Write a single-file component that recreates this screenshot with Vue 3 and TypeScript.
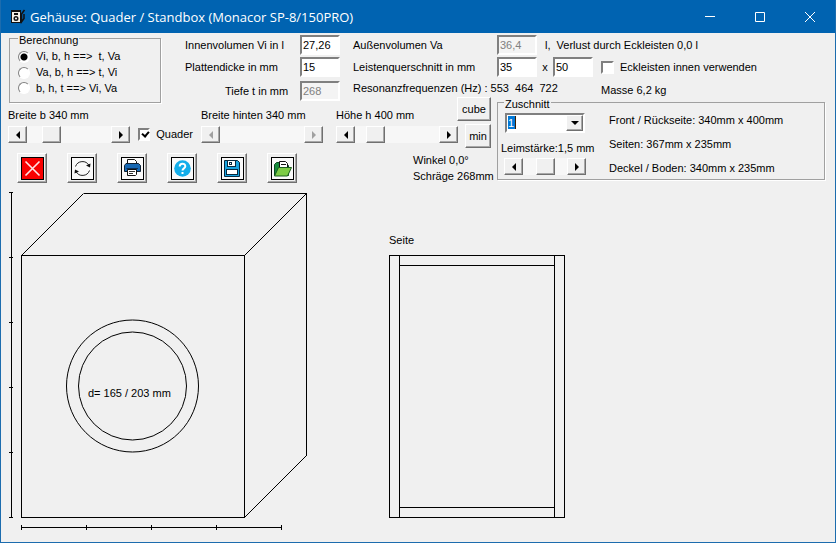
<script setup lang="ts">
import { ref } from 'vue'

const modes = ['Vi, b, h ==>  t, Va', 'Va, b, h ==> t, Vi', 'b, h, t ==> Vi, Va']
const mode = ref(0)
const innerVolume = ref('27,26')
const thickness = ref('15')
const depth = ref('268')
const outerVolume = ref('36,4')
const stripA = ref('35')
const stripB = ref('50')
const useStrips = ref(false)
const isBox = ref(true)
const width = ref(340)
const rearWidth = ref(340)
const height = ref(400)
const glue = ref(15)
const cut = ref('1')

const formatTenths = (n: number): string => (n / 10).toFixed(1).replace('.', ',')
</script>

<template>
  <div class="window">
    <header class="titlebar">
      <svg class="app-icon" width="16" height="16" viewBox="0 0 16 16" aria-hidden="true">
        <rect x="1" y="1" width="10" height="13" fill="#111" />
        <rect x="2" y="3" width="8" height="10" fill="#f3efe6" />
        <rect x="4" y="4" width="4" height="2" fill="#111" />
        <circle cx="6" cy="9.500" r="2.500" fill="#111" />
        <circle cx="6" cy="9.500" r="1" fill="#fff" />
        <path d="M14.500 1L11.500 5V13L14 9.500V5" fill="none" stroke="#111" stroke-width="1.500" />
      </svg>
      <h1>Gehäuse: Quader / Standbox (Monacor SP-8/150PRO)</h1>
      <button class="caption" type="button" aria-label="Minimieren">
        <svg width="10" height="10" viewBox="0 0 10 10"><path d="M0 4.500H10" /></svg>
      </button>
      <button class="caption" type="button" aria-label="Maximieren">
        <svg width="10" height="10" viewBox="0 0 10 10"><path d="M.5 .5H9.500V9.500H.5Z" /></svg>
      </button>
      <button class="caption" type="button" aria-label="Schließen">
        <svg width="10" height="10" viewBox="0 0 10 10"><path d="M0 0L10 10M10 0L0 10" /></svg>
      </button>
    </header>

    <main>
      <div class="panel">
        <section class="inner">
          <fieldset class="group calc">
            <legend>Berechnung</legend>
            <label v-for="(m, i) in modes" :key="i" class="option">
              <input v-model="mode" type="radio" name="mode" :value="i" />
              <span>{{ m }}</span>
            </label>
          </fieldset>
          <div class="fields">
            <div class="field">
              <label for="vi">Innenvolumen Vi in l</label>
              <input id="vi" v-model="innerVolume" class="box" type="text" />
            </div>
            <div class="field">
              <label for="pd">Plattendicke in mm</label>
              <input id="pd" v-model="thickness" class="box" type="text" />
            </div>
            <div class="field depth">
              <label for="td">Tiefe t in mm</label>
              <input id="td" v-model="depth" class="box" type="text" disabled />
            </div>
          </div>
        </section>

        <section class="outer">
          <label for="va">Außenvolumen Va</label>
          <div class="line">
            <input id="va" v-model="outerVolume" class="box" type="text" disabled />
            <span class="loss">l,&nbsp; Verlust durch Eckleisten 0,0 l</span>
          </div>
          <label for="la">Leistenquerschnitt in mm</label>
          <div class="line">
            <input id="la" v-model="stripA" class="box" type="text" />
            <span class="times">x</span>
            <input v-model="stripB" class="box" type="text" aria-label="Leistenquerschnitt, zweites Maß" />
            <label class="tick strips">
              <input v-model="useStrips" type="checkbox" />
              <span>Eckleisten innen verwenden</span>
            </label>
          </div>
          <div class="results">
            <span>Resonanzfrequenzen (Hz) : 553&nbsp; 464&nbsp; 722</span>
            <span class="mass">Masse 6,2 kg</span>
          </div>
        </section>

        <section class="widths">
          <div class="sliders">
            <div class="slider">
              <label for="b">Breite b {{ width }} mm</label>
              <div class="scroll">
                <button type="button" aria-label="Breite verringern" @click="width--"><i class="tri left"></i></button>
                <input id="b" v-model.number="width" type="range" min="100" max="1140" />
                <button type="button" aria-label="Breite erhöhen" @click="width++"><i class="tri right"></i></button>
              </div>
            </div>
            <label class="tick">
              <input v-model="isBox" type="checkbox" />
              <span>Quader</span>
            </label>
            <div class="slider">
              <label for="bh">Breite hinten {{ rearWidth }} mm</label>
              <div class="scroll off">
                <button type="button" disabled aria-label="Breite hinten verringern"><i class="tri left"></i></button>
                <input id="bh" v-model.number="rearWidth" type="range" min="100" max="1140" disabled />
                <button type="button" disabled aria-label="Breite hinten erhöhen"><i class="tri right"></i></button>
              </div>
            </div>
          </div>
          <nav class="toolbar">
            <button type="button" class="raised" aria-label="Schließen">
              <svg viewBox="0 0 23 23">
                <rect x=".5" y=".5" width="22" height="22" fill="#f80000" stroke="#000" />
                <path d="M4.500 4.500L18.500 18.500M18.500 4.500L4.500 18.500" stroke="#ffe4e4" stroke-width="1.600" />
              </svg>
            </button>
            <button type="button" class="raised" aria-label="Neu berechnen">
              <svg viewBox="0 0 23 23">
                <rect x=".5" y=".5" width="22" height="22" fill="#fafafa" stroke="#000" />
                <path d="M4.500 9.500A7.400 7.400 0 0 1 18 8.500M18.500 13.500A7.400 7.400 0 0 1 5 14.500" fill="none" stroke="#222" />
                <path d="M15 8.500L19.500 6.500L19 10.500ZM8 14.500L3.500 16.500L4 12.500Z" fill="#111" />
              </svg>
            </button>
            <button type="button" class="raised" aria-label="Drucken">
              <svg viewBox="0 0 23 23">
                <rect x=".5" y=".5" width="22" height="22" fill="#fafafa" stroke="#000" />
                <path d="M6.500 7V2.500H13.500L15.500 4.500V7" fill="#fff" stroke="#111" />
                <path d="M3.500 14.500V8.500L5 6.500H17.500L19.500 8.500V14.500Z" fill="#1768b3" stroke="#123" />
                <path d="M5.500 11.500H17" stroke="#0b2e55" />
                <path d="M6.500 12.500H15.500V17.500L14.500 18.500H6.500Z" fill="#fff" stroke="#111" />
                <path d="M8 14.500H14M8 16.500H12" stroke="#333" />
              </svg>
            </button>
            <button type="button" class="raised" aria-label="Hilfe">
              <svg viewBox="0 0 23 23">
                <rect x=".5" y=".5" width="22" height="22" fill="#fafafa" stroke="#000" />
                <circle cx="11.500" cy="11.500" r="8.300" fill="#14aeea" />
                <path d="M8.700 9.500C8.700 5.800 14.300 5.900 14.300 9.200C14.300 11.400 11.500 11.300 11.500 13.600" fill="none" stroke="#fff" stroke-width="2" />
                <rect x="10.500" y="15" width="2" height="2" fill="#fff" />
              </svg>
            </button>
            <button type="button" class="raised" aria-label="Speichern">
              <svg viewBox="0 0 23 23">
                <rect x=".5" y=".5" width="22" height="22" fill="#fafafa" stroke="#000" />
                <path d="M3.500 3.500H16.500L18.500 5.500V19.500H3.500Z" fill="#18a4e0" stroke="#062a40" />
                <rect x="6.500" y="3.500" width="8" height="6" fill="#fff" stroke="#062a40" />
                <rect x="8.500" y="5.500" width="2" height="2" fill="#fff" stroke="#062a40" />
                <rect x="5.500" y="12.500" width="11" height="5" fill="#fff" stroke="#062a40" />
              </svg>
            </button>
            <button type="button" class="raised" aria-label="Öffnen">
              <svg viewBox="0 0 23 23">
                <rect x=".5" y=".5" width="22" height="22" fill="#fafafa" stroke="#000" />
                <path d="M3.500 18.500V7.500L5.500 5.500H8.500V8.500H17.500V18.500Z" fill="#178a3c" stroke="#0a4a20" />
                <path d="M8.500 11V4.500H14.500L16.500 6.500V11Z" fill="#fff" stroke="#111" />
                <path d="M10 7.500H15" stroke="#111" />
                <path d="M3.500 19L7.500 10.500H20.500L16.500 19Z" fill="#7ccb45" stroke="#1b5e20" />
              </svg>
            </button>
          </nav>
        </section>

        <section class="heights">
          <div class="height-row">
            <div class="slider">
              <label for="h">Höhe h {{ height }} mm</label>
              <div class="scroll">
                <button type="button" aria-label="Höhe verringern" @click="height--"><i class="tri left"></i></button>
                <input id="h" v-model.number="height" type="range" min="100" max="1870" />
                <button type="button" aria-label="Höhe erhöhen" @click="height++"><i class="tri right"></i></button>
              </div>
            </div>
            <div class="presets">
              <button type="button" class="raised cube">cube</button>
              <button type="button" class="raised">min</button>
            </div>
          </div>
          <p>Winkel 0,0°<br />Schräge 268mm</p>
        </section>

        <fieldset class="group cutting">
          <legend>Zuschnitt</legend>
          <div class="cut-body">
            <div class="cut-left">
              <div class="combo">
                <select v-model="cut" aria-label="Zuschnitt">
                  <option>1</option>
                  <option>2</option>
                  <option>3</option>
                </select>
                <span class="drop raised" aria-hidden="true"><i class="tri down"></i></span>
              </div>
              <label for="glue">Leimstärke:{{ formatTenths(glue) }} mm</label>
              <div class="scroll">
                <button type="button" aria-label="Leimstärke verringern" @click="glue--"><i class="tri left"></i></button>
                <input id="glue" v-model.number="glue" type="range" min="0" max="30" />
                <button type="button" aria-label="Leimstärke erhöhen" @click="glue++"><i class="tri right"></i></button>
              </div>
            </div>
            <div class="parts">
              <span>Front / Rückseite: 340mm x 400mm</span>
              <span>Seiten: 367mm x 235mm</span>
              <span>Deckel / Boden: 340mm x 235mm</span>
            </div>
          </div>
        </fieldset>
      </div>

      <div class="drawings">
        <svg class="front" width="300" height="340" viewBox="0 0 300 340" role="img" aria-label="Frontansicht">
          <g class="ink">
            <path d="M3.500 2V327M1 2.500H5M1 67.500H5M1 132.500H5M1 197.500H5M1 262.500H5M1 327.500H5" />
            <path d="M13 337.500H274M13.500 335V340M78.500 335V340M143.500 335V340M208.500 335V340M273.500 335V340" />
            <rect x="13.500" y="65.500" width="223" height="262" />
            <path d="M76 3.500H298.500V265.500" />
          </g>
          <g class="soft">
            <path d="M13.500 65.500L75.500 3.500M236.500 65.500L298.500 3.500M236.500 327.500L298.500 265.500" />
            <circle cx="124.500" cy="196" r="66" />
            <circle cx="124.500" cy="196" r="54" />
          </g>
          <text x="80" y="207">d= 165 / 203 mm</text>
        </svg>
        <figure>
          <figcaption>Seite</figcaption>
          <svg width="176" height="264" viewBox="0 0 176 264" role="img" aria-label="Seitenansicht">
            <path class="ink" d="M.5 .5H175.500V262.500H.5ZM10.500 .5V262.500M165.500 .5V262.500M10.500 10.500H165.500M10.500 252.500H165.500" />
          </svg>
        </figure>
      </div>
    </main>
  </div>
</template>

<style>
body {
  background: #f0f0f0;
}
</style>

<style scoped>
* {
  box-sizing: border-box;
}
.window {
  min-height: 100vh;
  display: flex;
  flex-direction: column;
  border: 1px solid #1c6cae;
  border-top: 0;
  background: #f0f0f0;
  color: #000;
  font: 11px/13px "Liberation Sans", Arial, sans-serif;
}
button,
input,
select {
  font: inherit;
  color: inherit;
  margin: 0;
  padding: 0;
  border-radius: 0;
}
label,
span,
p,
legend {
  white-space: pre;
}
.titlebar {
  display: flex;
  align-items: center;
  height: 33px;
  padding-left: 9px;
  background: #0063b1;
  color: #fff;
}
.titlebar h1 {
  flex: 1;
  margin: 0 0 0 4px;
  font: 400 13px/18px "Open Sans", "Noto Sans", sans-serif;
  white-space: nowrap;
}
.caption {
  display: flex;
  align-items: center;
  justify-content: center;
  width: 50px;
  height: 32px;
  border: 0;
  background: none;
}
.caption svg {
  fill: none;
  stroke: #fff;
}
main {
  flex: 1;
  padding: 0 10px 9px 7px;
}
.panel {
  display: grid;
  grid-template-columns: 328px 161px 1fr;
  grid-template-rows: 64px 12px auto;
}
.inner {
  grid-area: 1 / 1 / 3 / 2;
  display: flex;
}
.outer {
  grid-area: 1 / 2 / 2 / 4;
  display: grid;
  grid-template-columns: 144px 1fr;
  grid-template-rows: 20px 20px 16px;
  row-gap: 2px;
  align-items: center;
  padding: 2px 0 0 17px;
}
.widths {
  grid-area: 3 / 1 / 4 / 2;
}
.heights {
  grid-area: 2 / 2 / 4 / 3;
}
.cutting {
  grid-area: 2 / 3 / 4 / 4;
}
.group {
  min-width: 0;
  margin: 0;
  border: 1px solid #a0a0a0;
  box-shadow: 1px 1px #fff;
}
.group legend {
  height: 10px;
  padding: 2px 1px 0;
  line-height: 10px;
}
.calc {
  display: flex;
  flex-direction: column;
  flex: none;
  width: 152px;
  height: 70px;
  margin-left: 1px;
  padding: 6px 8px;
}
.option {
  display: flex;
  align-items: center;
  height: 16px;
  gap: 6px;
}
.option input {
  appearance: none;
  width: 12px;
  height: 12px;
  border: 1px solid #808080;
  border-right-color: #fff;
  border-bottom-color: #fff;
  border-radius: 6px;
  background: #fff;
}
.option input:checked {
  background: radial-gradient(circle, #000 3px, #fff 4px);
}
.fields {
  flex: 1;
  margin-right: -4px;
  padding-top: 2px;
}
.field {
  display: grid;
  grid-template-columns: 1fr 40px;
  align-items: center;
  margin-bottom: 2px;
  padding-left: 24px;
}
.depth {
  margin-top: 4px;
  padding-left: 64px;
}
.box {
  width: 40px;
  height: 20px;
  padding-left: 1px;
  border: 2px solid;
  border-color: #808080 #fff #fff #808080;
  background: #fff;
  outline: 0;
}
.box:disabled {
  color: #808080;
  background: #f4f4f4;
}
.line {
  display: flex;
  align-items: center;
}
.loss {
  margin-left: 8px;
}
.times {
  width: 16px;
  text-align: center;
}
.tick {
  display: flex;
  align-items: center;
  gap: 6px;
}
.strips {
  margin-left: 8px;
}
.tick input {
  appearance: none;
  width: 13px;
  height: 13px;
  border: 2px solid;
  border-color: #808080 #fff #fff #808080;
  background: #fff;
}
.tick input:checked::after {
  content: "";
  display: block;
  width: 3px;
  height: 5px;
  margin: 0 0 0 3px;
  border: solid #000;
  border-width: 0 2px 2px 0;
  transform: rotate(40deg);
}
.results {
  grid-column: 1 / 3;
  display: grid;
  grid-template-columns: 248px 1fr;
  align-items: end;
}
.results span {
  padding-top: 2px;
}
.results .mass {
  margin-bottom: -2px;
}
.sliders {
  display: flex;
  align-items: flex-end;
  gap: 8px;
}
.sliders .tick {
  height: 17px;
  width: 55px;
}
.slider {
  width: 122px;
}
.slider label {
  display: block;
  height: 17px;
}
.scroll {
  display: flex;
  height: 17px;
  background: #f7f7f7;
}
.scroll button,
.raised {
  border: 1px solid;
  border-color: #fff #707070 #707070 #fff;
  background: #f0f0f0;
  box-shadow: inset -1px -1px #a8a8a8;
}
.scroll button {
  display: flex;
  align-items: center;
  justify-content: center;
  flex: none;
  width: 19px;
}
.scroll input {
  appearance: none;
  flex: 1;
  min-width: 0;
  background: none;
}
.scroll input::-webkit-slider-thumb {
  appearance: none;
  width: 19px;
  height: 17px;
  border: 1px solid;
  border-color: #fff #707070 #707070 #fff;
  background: #f0f0f0;
  box-shadow: inset -1px -1px #a8a8a8;
}
.off input::-webkit-slider-thumb {
  visibility: hidden;
}
.tri {
  border: 4px solid transparent;
}
.left {
  border-left: 0;
  border-right-color: #000;
}
.right {
  border-right: 0;
  border-left-color: #000;
}
.down {
  border-bottom: 0;
  border-top-color: #000;
}
.off .left {
  border-right-color: #a0a0a0;
}
.off .right {
  border-left-color: #a0a0a0;
}
.toolbar {
  display: flex;
  gap: 20px;
  padding: 10px 0 0 9px;
}
.toolbar button {
  display: flex;
  align-items: center;
  justify-content: center;
  width: 30px;
  height: 30px;
}
.toolbar svg {
  flex: none;
  width: 23px;
  height: 23px;
}
.height-row {
  display: flex;
  justify-content: space-between;
  width: 155px;
}
.height-row .slider {
  flex: none;
  padding-top: 12px;
}
.presets {
  display: flex;
  flex-direction: column;
  align-items: flex-end;
  gap: 3px;
  margin-left: -1px;
}
.presets button {
  width: 26px;
  height: 24px;
}
.presets .cube {
  width: 34px;
}
.heights p {
  margin: 4px 0 0 77px;
  line-height: 16px;
}
.cutting {
  height: 83px;
  padding: 0 0 0 3px;
}
.cutting legend {
  margin-left: 3px;
}
.cut-body {
  display: flex;
}
.cut-left {
  width: 108px;
}
.cut-left label {
  display: block;
  margin: 9px 0 3px;
}
.cut-left .scroll {
  width: 82px;
  margin-left: 3px;
}
.combo {
  position: relative;
  width: 80px;
  height: 20px;
  margin: 6px 0 0 4px;
}
.combo select {
  display: block;
  appearance: none;
  width: 100%;
  height: 100%;
  padding: 0 20px 0 1px;
  border: 2px solid;
  border-color: #808080 #fff #fff #808080;
  outline: 0;
  color: #fff;
  background:
    linear-gradient(#0078d7, #0078d7) 1px 1px / 7px 13px no-repeat,
    linear-gradient(#3a1c00, #3a1c00) 8px 1px / 1px 13px no-repeat,
    #fff;
}
.combo option {
  color: #000;
}
.drop {
  position: absolute;
  top: 2px;
  right: 2px;
  bottom: 2px;
  display: flex;
  align-items: center;
  justify-content: center;
  width: 17px;
  pointer-events: none;
}
.parts {
  display: flex;
  flex-direction: column;
  gap: 11px;
  padding-top: 7px;
}
.drawings {
  display: flex;
  gap: 81px;
  margin-top: 6px;
}
.drawings svg {
  display: block;
  flex: none;
  overflow: visible;
}
.ink {
  fill: none;
  stroke: #000;
  shape-rendering: crispEdges;
}
.soft {
  fill: none;
  stroke: #000;
}
figure {
  margin: 44px 0 0;
}
figcaption {
  height: 21px;
}
</style>
